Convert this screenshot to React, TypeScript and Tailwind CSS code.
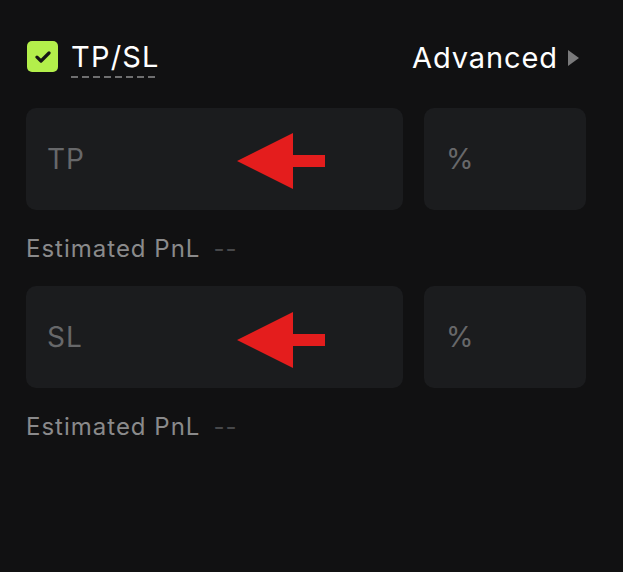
import React from "react"

function Arrow({ className }: { className: string }) {
    return (
        <svg className={className} width="90" height="57" viewBox="0 0 90 57" fill="none">
            <polygon points="0,28 56,0 56,22 88,22 88,34 56,34 56,56" fill="#e41d1d" />
        </svg>
    )
}

function PriceRow({ label, arrowTop }: { label: string; arrowTop: string }) {
    return (
        <div>
            <div className="flex gap-[21px]">
                <div className="relative flex-1 h-[102px] rounded-[10px] bg-[#1b1c1e] flex items-center pl-[21px]">
                    <span className="text-[28px] tracking-[1px] text-[#67686a]">{label}</span>
                    <Arrow className={`absolute left-[211px] ${arrowTop}`} />
                </div>
                <div className="w-[162px] h-[102px] rounded-[10px] bg-[#1b1c1e] flex items-center pl-[22px]">
                    <span className="text-[28px] text-[#67686a]">%</span>
                </div>
            </div>
            <div className="mt-[23px] h-[32px] flex items-center gap-[13px] text-[24px]">
                <span className="text-[#8a8a8b] tracking-[1px]">Estimated PnL</span>
                <span className="text-[#47484a] tracking-[1px]">--</span>
            </div>
        </div>
    )
}

export default function App() {
    return (
        <div
            className="w-[623px] h-[572px] bg-[#111112] pl-[26px] pr-[37px] pt-[41px]"
            style={{ fontFamily: "Inter, 'Liberation Sans', sans-serif" }}
        >
            {/* header */}
            <div className="flex items-start justify-between h-[67px]">
                <div className="flex items-start gap-[13px]">
                    <div className="ml-[1px] w-[31px] h-[31px] rounded-[5px] bg-[#b3ef4b] flex items-center justify-center">
                        <svg width="16" height="12" viewBox="0 0 16 12" fill="none">
                            <path d="M2 6.2 L6 10 L14 2" stroke="#151515" strokeWidth="3.2" strokeLinecap="round" strokeLinejoin="round" />
                        </svg>
                    </div>
                    <div className="flex flex-col">
                        <span className="text-[29px] leading-[31px] tracking-[1.2px] text-white">TP/SL</span>
                        <div className="mt-[4px] h-[2px] w-[87px] bg-[linear-gradient(to_right,#6f6f70_60%,transparent_0)] bg-[length:11px_2px] bg-repeat-x" />
                    </div>
                </div>
                <div className="flex items-center gap-[10px] h-[33px] pr-[7px]">
                    <span className="text-[29px] tracking-[0.9px] text-white">Advanced</span>
                    <svg width="11" height="16" viewBox="0 0 11 16">
                        <polygon points="0,0 11,8 0,16" fill="#7a7a7b" />
                    </svg>
                </div>
            </div>

            <div className="flex flex-col gap-[21px]">
                <PriceRow label="TP" arrowTop="top-[25px]" />
                <PriceRow label="SL" arrowTop="top-[26px]" />
            </div>
        </div>
    )
}
